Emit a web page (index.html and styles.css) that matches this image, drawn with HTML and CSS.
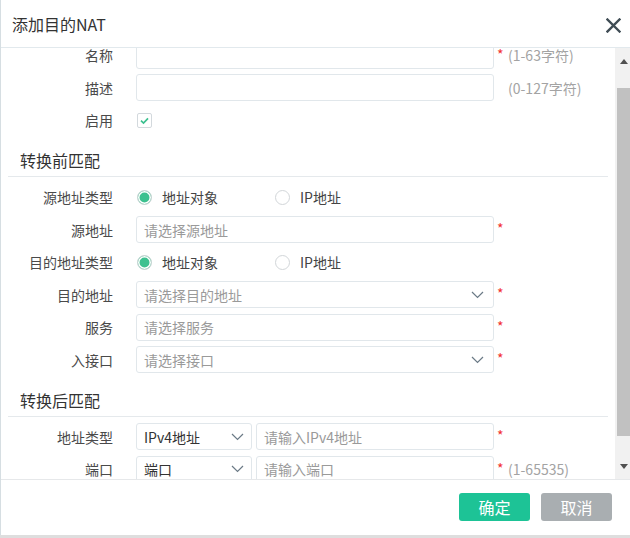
FILE: index.html
```html
<!DOCTYPE html>
<html lang="zh-CN">
<head>
<meta charset="utf-8">
<title>添加目的NAT</title>
<link rel="stylesheet" href="styles.css">
</head>
<body>
<div class="dialog">
  <header class="dlg-head">
    <span class="dlg-title">添加目的NAT</span>
    <span class="dlg-close" aria-label="关闭">
      <svg width="15" height="15" viewBox="0 0 15 15"><path d="M1.5 1.5 L13.5 13.5 M13.5 1.5 L1.5 13.5" stroke="#3f4c54" stroke-width="2.4" stroke-linecap="square" fill="none"/></svg>
    </span>
  </header>

  <div class="dlg-main">
    <div class="scroll" id="scroll">
      <div class="form">
        <div class="row">
          <label class="lbl">名称</label>
          <input class="ctl input" type="text">
          <span class="req">*</span><span class="hint">(1-63字符)</span>
        </div>
        <div class="row">
          <label class="lbl">描述</label>
          <input class="ctl input" type="text">
          <span class="req"></span><span class="hint">(0-127字符)</span>
        </div>
        <div class="row">
          <label class="lbl">启用</label>
          <span class="checkbox">
            <svg width="13" height="13" viewBox="0 0 13 13"><path d="M3 6.6 L5.5 9 L10 4.3" stroke="#3cc08f" stroke-width="1.7" fill="none"/></svg>
          </span>
        </div>

        <div class="sec-head">转换前匹配</div>
        <div class="sec-body">
          <div class="row">
            <label class="lbl">源地址类型</label>
            <span class="radio-opt"><span class="radio on"></span>地址对象</span>
            <span class="radio-opt"><span class="radio"></span>IP地址</span>
          </div>
          <div class="row">
            <label class="lbl">源地址</label>
            <input class="ctl input" type="text" placeholder="请选择源地址">
            <span class="req">*</span>
          </div>
          <div class="row">
            <label class="lbl">目的地址类型</label>
            <span class="radio-opt"><span class="radio on"></span>地址对象</span>
            <span class="radio-opt"><span class="radio"></span>IP地址</span>
          </div>
          <div class="row">
            <label class="lbl">目的地址</label>
            <div class="ctl select"><span class="ph">请选择目的地址</span><svg class="chev" width="13" height="8" viewBox="0 0 13 8"><path d="M1 1 L6.5 6.5 L12 1" stroke="#6b7a86" stroke-width="1.2" fill="none"/></svg></div>
            <span class="req">*</span>
          </div>
          <div class="row">
            <label class="lbl">服务</label>
            <input class="ctl input" type="text" placeholder="请选择服务">
            <span class="req">*</span>
          </div>
          <div class="row">
            <label class="lbl">入接口</label>
            <div class="ctl select"><span class="ph">请选择接口</span><svg class="chev" width="13" height="8" viewBox="0 0 13 8"><path d="M1 1 L6.5 6.5 L12 1" stroke="#6b7a86" stroke-width="1.2" fill="none"/></svg></div>
            <span class="req">*</span>
          </div>
        </div>

        <div class="sec-head">转换后匹配</div>
        <div class="sec-body">
          <div class="row">
            <label class="lbl">地址类型</label>
            <div class="pair">
              <div class="select small"><span class="val">IPv4地址</span><svg class="chev" width="13" height="8" viewBox="0 0 13 8"><path d="M1 1 L6.5 6.5 L12 1" stroke="#6b7a86" stroke-width="1.2" fill="none"/></svg></div>
              <input class="input grow" type="text" placeholder="请输入IPv4地址">
            </div>
            <span class="req">*</span>
          </div>
          <div class="row">
            <label class="lbl">端口</label>
            <div class="pair">
              <div class="select small"><span class="val">端口</span><svg class="chev" width="13" height="8" viewBox="0 0 13 8"><path d="M1 1 L6.5 6.5 L12 1" stroke="#6b7a86" stroke-width="1.2" fill="none"/></svg></div>
              <input class="input grow" type="text" placeholder="请输入端口">
            </div>
            <span class="req">*</span><span class="hint">(1-65535)</span>
          </div>
        </div>
      </div>
    </div>

    <div class="vscroll">
      <div class="sb-btn">
        <svg width="8" height="5" viewBox="0 0 8 5"><path d="M0 5 L4 0 L8 5 Z" fill="#505050"/></svg>
      </div>
      <div class="sb-track"><div class="sb-thumb"></div></div>
      <div class="sb-btn">
        <svg width="8" height="5" viewBox="0 0 8 5"><path d="M0 0 L8 0 L4 5 Z" fill="#505050"/></svg>
      </div>
    </div>
  </div>

  <footer class="dlg-foot">
    <button class="btn ok">确定</button>
    <button class="btn cancel">取消</button>
  </footer>
</div>
<script src="script.js"></script>
</body>
</html>
```

FILE: styles.css
```css
* { box-sizing: border-box; }

html, body {
  margin: 0;
  padding: 0;
  background: #dedede;
}

body {
  width: 630px;
  height: 538px;
  overflow: hidden;
  font-family: "Noto Sans CJK SC", "Open Sans", sans-serif;
  font-size: 14px;
  color: #444;
}

.dialog {
  width: 630px;
  height: 535px;
  background: #fff;
  border-left: 1px solid #d6dee2;
  display: flex;
  flex-direction: column;
}

.dlg-head {
  height: 48px;
  flex: none;
  border-bottom: 1px solid #e2e9ed;
  display: flex;
  align-items: center;
  justify-content: space-between;
  padding: 0 9px 0 11px;
}

.dlg-title {
  font-size: 16px;
  color: #333;
  line-height: 22px;
}

.dlg-close {
  display: flex;
  width: 15px;
  height: 15px;
  margin-top: 3px;
}

.dlg-main {
  flex: 1;
  min-height: 0;
  display: flex;
}

.scroll {
  flex: 1;
  min-width: 0;
  overflow: hidden;
}

.form {
  padding: 19.5px 0 20px;
  display: flex;
  flex-direction: column;
}

.sec-body {
  display: flex;
  flex-direction: column;
  padding-top: 6.5px;
}

.row {
  display: flex;
  align-items: center;
  height: 27px;
  flex: none;
  margin-bottom: 5.5px;
}

.lbl {
  width: 112px;
  margin-right: 23px;
  text-align: right;
  color: #4a4a4a;
  white-space: nowrap;
  flex: none;
}

.ctl {
  width: 358px;
  flex: none;
}

.input {
  height: 27px;
  border: 1px solid #e1e7eb;
  border-radius: 3px;
  background: #fff;
  padding: 0 7px;
  font: inherit;
  color: #333;
  outline: none;
}

.input::placeholder {
  color: #9a9a9a;
}

.select {
  height: 27px;
  border: 1px solid #e1e7eb;
  border-radius: 3px;
  background: #fff;
  padding: 0 9px 0 7px;
  display: flex;
  align-items: center;
  justify-content: space-between;
}

.select .ph { color: #9a9a9a; }
.select .val { color: #333; }

.chev { flex: none; }

.pair {
  width: 358px;
  flex: none;
  display: flex;
  gap: 4px;
}

.select.small {
  width: 116px;
  flex: none;
  padding-right: 7px;
}

.input.grow {
  flex: 1;
  min-width: 0;
}

.req {
  width: 14px;
  flex: none;
  padding-left: 3px;
  color: #f23030;
  font-size: 14px;
  align-self: flex-start;
  line-height: 24px;
}

.hint {
  color: #a3a3a3;
  white-space: nowrap;
}

.checkbox {
  width: 15px;
  height: 15px;
  border: 1px solid #d3d9dd;
  border-radius: 2px;
  display: flex;
  align-items: center;
  justify-content: center;
  margin-left: 1px;
}

.radio-opt {
  width: 138px;
  flex: none;
  display: flex;
  align-items: center;
  gap: 10px;
  color: #444;
}

.radio {
  width: 15px;
  height: 15px;
  border: 1px solid #d2d6d9;
  border-radius: 50%;
  margin-left: 1px;
  background: #fff;
  flex: none;
}

.radio.on {
  background: #3cc18f;
  box-shadow: inset 0 0 0 1.5px #fff;
}

.sec-head {
  margin: 10px 7px 0;
  padding: 0 0 5px 12px;
  border-bottom: 1px solid #e5e9ec;
  font-size: 16px;
  line-height: 22px;
  color: #333;
}

.vscroll {
  width: 15px;
  flex: none;
  background: #f1f1f1;
  display: flex;
  flex-direction: column;
}

.sb-btn {
  height: 26px;
  flex: none;
  display: flex;
  align-items: center;
  justify-content: center;
  padding-left: 2px;
}

.sb-track {
  flex: 1;
  padding: 14px 0 17px 2px;
  display: flex;
}

.sb-thumb {
  flex: 1;
  background: #c1c1c1;
}

.dlg-foot {
  flex: none;
  border-top: 1px solid #e6e8ea;
  padding: 13px 18px 14px 0;
  display: flex;
  justify-content: flex-end;
  gap: 11px;
}

.btn {
  width: 71px;
  height: 28px;
  border: none;
  border-radius: 3px;
  color: #fff;
  font-family: inherit;
  font-size: 16px;
  line-height: 28px;
  padding: 0;
}

.btn.ok { background: #1dc396; }
.btn.cancel { background: #a9aeb1; }
```

FILE: script.js
```js
document.getElementById('scroll').scrollTop = 26;
```
